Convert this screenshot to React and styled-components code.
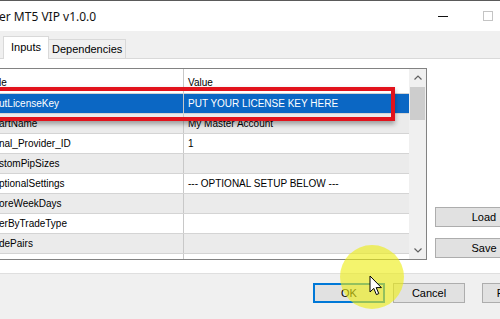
import React from "react";
import styled, { createGlobalStyle } from "styled-components";

const GlobalStyle = createGlobalStyle`
  html, body {
    margin: 0;
    padding: 0;
    background: #ffffff;
    overflow: hidden;
  }
`;

const Window = styled.div`
  position: relative;
  width: 500px;
  height: 319px;
  overflow: hidden;
  display: flex;
  flex-direction: column;
  font-family: "Liberation Sans", Arial, sans-serif;
  color: #000;
`;

const TitleBar = styled.div`
  height: 30px;
  flex: none;
  border-top: 1px solid #5a5a5a;
  background: #ffffff;
  display: flex;
  align-items: center;
  justify-content: space-between;
`;

const Title = styled.div`
  font-family: "Noto Sans", "Open Sans", sans-serif;
  font-size: 12px;
  margin-left: -1px;
  margin-top: 1px;
  color: #111;
`;

const Controls = styled.div`
  display: flex;
  align-items: center;
  gap: 35px;
  margin-right: 7px;
`;

const Minimize = styled.div`
  width: 10px;
  height: 1px;
  background: #111;
  margin-top: 1px;
`;

const Maximize = styled.div`
  width: 8px;
  height: 8px;
  border: 1px solid #c4c4c4;
`;

const TabStrip = styled.div`
  height: 27px;
  flex: none;
  background: #f0f0f0;
  border-bottom: 1px solid #d9d9d9;
  display: flex;
  align-items: flex-end;
  padding-left: 3px;
`;

const Tab = styled.div`
  font-size: 11px;
  height: ${(p) => (p.$active ? "22px" : "18px")};
  line-height: ${(p) => (p.$active ? "20px" : "19px")};
  padding: 0 ${(p) => (p.$active ? "7px" : "3px")};
  background: ${(p) => (p.$active ? "#ffffff" : "#f0f0f0")};
  border: 1px solid #d9d9d9;
  border-bottom: none;
  margin-bottom: ${(p) => (p.$active ? "-1px" : "0")};
  margin-left: ${(p) => (p.$active ? "0" : "-1px")};
  position: relative;
  z-index: ${(p) => (p.$active ? 1 : 0)};
`;

const Page = styled.div`
  height: 214px;
  flex: none;
  background: #ffffff;
  display: flex;
  align-items: flex-start;
  gap: 8px;
  padding-top: 9px;
  box-sizing: border-box;
`;

const Table = styled.div`
  position: relative;
  width: 427px;
  height: 192px;
  flex: none;
  box-sizing: border-box;
  border: 1px solid #828282;
  border-left: none;
  display: flex;
  font-size: 10px;
`;

const Rows = styled.div`
  flex: 1;
  overflow: hidden;
`;

const HeaderRow = styled.div`
  display: flex;
  height: 24px;
  line-height: 28px;
  border-bottom: 1px solid #d4d4d4;
  background: #ffffff;
`;

const Row = styled.div`
  display: flex;
  height: 19px;
  line-height: 20px;
  border-bottom: 1px solid #d4d4d4;
  background: ${(p) => (p.$selected ? "#0b67c4" : p.$shade ? "#ebebeb" : "#ffffff")};
  color: ${(p) => (p.$selected ? "#ffffff" : "#000")};
`;

const NameCell = styled.div`
  width: 185px;
  flex: none;
  box-sizing: border-box;
  border-right: 1px solid #c8c8c8;
  white-space: nowrap;
  overflow: hidden;
  margin-left: -1px;
`;

const ValueCell = styled.div`
  flex: 1;
  padding-left: 4px;
  white-space: nowrap;
  overflow: hidden;
`;

const ScrollBar = styled.div`
  width: 17px;
  flex: none;
  background: #f0f0f0;
  display: flex;
  flex-direction: column;
  align-items: center;
`;

const Arrow = styled.div`
  height: 17px;
  width: 17px;
  display: flex;
  align-items: center;
  justify-content: center;
  flex: none;
`;

const Thumb = styled.div`
  width: 15px;
  height: 33px;
  background: #cdcdcd;
  margin-top: 1px;
`;

const Spacer = styled.div`
  flex: 1;
`;

const Highlight = styled.div`
  position: absolute;
  left: -10px;
  top: 18px;
  width: 405px;
  height: 34px;
  box-sizing: border-box;
  border: 4px solid #e2131c;
  box-shadow: 0 3px 5px rgba(0, 0, 0, 0.35);
  pointer-events: none;
`;

const SideButtons = styled.div`
  height: 190px;
  display: flex;
  flex-direction: column;
  justify-content: flex-end;
  gap: 11px;
`;

const Button = styled.div`
  width: ${(p) => p.$width || 73}px;
  height: 18px;
  flex: none;
  line-height: 19px;
  text-align: center;
  font-size: 11px;
  background: #e1e1e1;
  border: 1px solid ${(p) => (p.$default ? "#0078d7" : "#adadad")};
  box-shadow: ${(p) => (p.$default ? "inset 0 0 0 1px #0078d7" : "none")};
  white-space: nowrap;
`;

const ButtonBar = styled.div`
  height: 37px;
  flex: none;
  background: #f0f0f0;
  border-top: 1px solid #dfdfdf;
  display: flex;
  align-items: flex-start;
  padding: 9px 0 0 313px;
  box-sizing: content-box;
  gap: 8px;
`;

const History = styled.div`
  height: 20px;
  flex: none;
  border-top: 1px solid #646464;
  background: #ffffff;
  display: flex;
  font-size: 12px;
  line-height: 21px;
`;

const HistCell = styled.div`
  width: ${(p) => p.$w}px;
  flex: none;
  box-sizing: border-box;
  border-right: 1px solid #e0e0e0;
  text-align: ${(p) => p.$align || "right"};
  padding: 0 ${(p) => p.$pad ?? 4}px 0 ${(p) => p.$padLeft ?? 0}px;
  white-space: nowrap;
  overflow: hidden;
`;

const Spotlight = styled.div`
  position: absolute;
  left: 340px;
  top: 245px;
  width: 64px;
  height: 64px;
  border-radius: 50%;
  background: rgba(238, 238, 20, 0.62);
  pointer-events: none;
`;

const Cursor = styled.svg`
  position: absolute;
  left: 369px;
  top: 275px;
  pointer-events: none;
`;

const rows = [
  { name: "utLicenseKey", value: "PUT YOUR LICENSE KEY HERE", selected: true },
  { name: "artName", value: "My Master Account" },
  { name: "nal_Provider_ID", value: "1" },
  { name: "stomPipSizes", value: "" },
  { name: "ptionalSettings", value: "--- OPTIONAL SETUP BELOW ---" },
  { name: "oreWeekDays", value: "" },
  { name: "erByTradeType", value: "" },
  { name: "dePairs", value: "" },
  { name: "", value: "" },
];

const historyCols = [
  { w: 12, label: "\u25B2", align: "left", pad: 0, padLeft: 0 },
  { w: 50, label: "Ticket", align: "left", padLeft: 7 },
  { w: 81, label: "Time" },
  { w: 54, label: "Type" },
  { w: 56, label: "Volume" },
  { w: 52, label: "Price" },
  { w: 54, label: "S / L", pad: 8 },
  { w: 54, label: "T / P", pad: 7 },
  { w: 55, label: "Price" },
  { w: 40, label: "" },
];

const App = () => {
  return (
    <>
      <GlobalStyle />
      <Window>
        <TitleBar>
          <Title>er MT5 VIP v1.0.0</Title>
          <Controls>
            <Minimize />
            <Maximize />
          </Controls>
        </TitleBar>
        <TabStrip>
          <Tab $active>Inputs</Tab>
          <Tab>Dependencies</Tab>
        </TabStrip>
        <Page>
          <Table>
            <Rows>
              <HeaderRow>
                <NameCell>le</NameCell>
                <ValueCell>Value</ValueCell>
              </HeaderRow>
              {rows.map((r, i) => (
                <Row key={i} $selected={r.selected} $shade={i % 2 === 1}>
                  <NameCell>{r.name}</NameCell>
                  <ValueCell>{r.value}</ValueCell>
                </Row>
              ))}
            </Rows>
            <ScrollBar>
              <Arrow>
                <svg width="8" height="5" viewBox="0 0 8 5">
                  <path d="M0.5 4.5 L4 1 L7.5 4.5" fill="none" stroke="#606060" strokeWidth="1.2" />
                </svg>
              </Arrow>
              <Thumb />
              <Spacer />
              <Arrow>
                <svg width="8" height="5" viewBox="0 0 8 5">
                  <path d="M0.5 0.5 L4 4 L7.5 0.5" fill="none" stroke="#606060" strokeWidth="1.2" />
                </svg>
              </Arrow>
            </ScrollBar>
            <Highlight />
          </Table>
          <SideButtons>
            <Button $width={96}>Load</Button>
            <Button $width={96}>Save</Button>
          </SideButtons>
        </Page>
        <ButtonBar>
          <Button $default $width={70}>OK</Button>
          <Button $width={70}>Cancel</Button>
          <Button $width={56} style={{ marginLeft: 9 }}>Reset</Button>
        </ButtonBar>
        <History>
          {historyCols.map((c, i) => (
            <HistCell key={i} $w={c.w} $align={c.align} $pad={c.pad} $padLeft={c.padLeft}>
              {c.label}
            </HistCell>
          ))}
        </History>
        <Spotlight />
        <Cursor width="14" height="22" viewBox="0 0 14 22">
          <path
            d="M1 1 L1 17 L4.8 13.4 L7.4 19.6 L9.8 18.6 L7.2 12.6 L12.4 12.6 Z"
            fill="#ffffff"
            stroke="#000000"
            strokeWidth="1"
            strokeLinejoin="round"
          />
        </Cursor>
      </Window>
    </>
  );
};

export default App;
